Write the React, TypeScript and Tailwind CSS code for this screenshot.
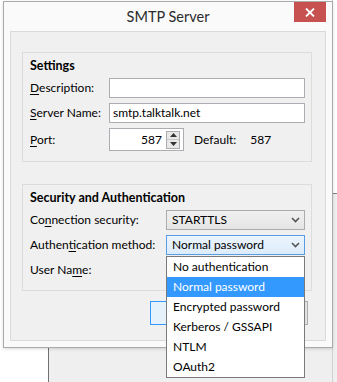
import React from "react";

const U = ({ children }: { children: React.ReactNode }) => (
  <span className="underline decoration-1 underline-offset-2">{children}</span>
);

const Chevron = () => (
  <svg width="9" height="6" viewBox="0 0 9 6" className="shrink-0">
    <path d="M1 1 L4.5 4.5 L8 1" fill="none" stroke="#555" strokeWidth="1.6" />
  </svg>
);

export default function App() {
  const items = [
    "No authentication",
    "Normal password",
    "Encrypted password",
    "Kerberos / GSSAPI",
    "NTLM",
    "OAuth2",
  ];
  return (
    <div
      className="relative w-[337px] h-[382px] overflow-hidden bg-white text-[12px] text-black"
      style={{ fontFamily: "Lato, 'Liberation Sans', sans-serif" }}
    >
      {/* desktop behind */}
      <div className="absolute left-[48px] top-[348px] w-[300px] h-[40px] bg-[#efefef] border-l border-[#707070]" />
      <div className="absolute left-[333px] top-[193px] w-[10px] h-[200px] bg-[#efefef] border-t border-[#808080]" />
      <div className="absolute left-[332px] top-0 w-px h-[382px] bg-[#d0d0d0]" />

      {/* window */}
      <div className="absolute left-[3px] top-[1px] w-[330px] h-[347px] border border-[#aaaaaa] bg-[#fafafa] shadow-[0_1px_3px_rgba(0,0,0,0.15)] flex flex-col">
        <div className="relative h-[29px] flex items-center justify-center">
          <span className="text-[14.5px] text-[#2b2b2b] mt-[1px]">SMTP Server</span>
          <div className="absolute right-[6px] top-0 w-[32px] h-[20px] bg-[#c75050] flex items-center justify-center">
            <svg width="10" height="9" viewBox="0 0 10 9">
              <path d="M1 0.5 L9 8.5 M9 0.5 L1 8.5" stroke="white" strokeWidth="1.8" />
            </svg>
          </div>
        </div>
        <div className="mx-[6px] border border-[#d9d9d9] bg-[#f0f0f0] h-[310px] px-[11px] pt-[20px] flex flex-col">
          {/* Settings group */}
          <div className="border border-[#dcdcdc] mr-[2px] pl-[7px] pr-[6px] pt-[6px] pb-[10px] flex flex-col">
            <div className="h-[14px] leading-[14px] font-bold text-[12.5px]">Settings</div>
            <div className="mt-[5px] flex items-center h-[20px]">
              <span className="w-[79px]">
                <U>D</U>escription:
              </span>
              <div className="flex-1 h-[20px] border border-[#abadb3] bg-white" />
            </div>
            <div className="mt-[5px] flex items-center h-[20px]">
              <span className="w-[79px]">
                <U>S</U>erver Name:
              </span>
              <div className="flex-1 h-[20px] border border-[#abadb3] bg-white flex items-center px-[3px]">
                smtp.talktalk.net
              </div>
            </div>
            <div className="mt-[5px] flex items-center h-[23px]">
              <span className="w-[79px]">
                <U>P</U>ort:
              </span>
              <div className="w-[75px] h-[23px] border border-[#abadb3] bg-white flex items-center justify-end pr-[3px] gap-[4px]">
                <span>587</span>
                <div className="w-[14px] h-[18px] border border-[#acacac] bg-[#e8e8e8] flex flex-col">
                  <div className="flex-1 flex items-center justify-center border-b border-[#c8c8c8]">
                    <svg width="7" height="4" viewBox="0 0 7 4"><path d="M0 4 L3.5 0 L7 4Z" fill="#333" /></svg>
                  </div>
                  <div className="flex-1 flex items-center justify-center">
                    <svg width="7" height="4" viewBox="0 0 7 4"><path d="M0 0 L3.5 4 L7 0Z" fill="#333" /></svg>
                  </div>
                </div>
              </div>
              <span className="ml-[10px]">Default:</span>
              <span className="ml-[14px]">587</span>
            </div>
          </div>

          {/* Security group */}
          <div className="mt-[22px] border border-[#dcdcdc] mr-[2px] pl-[7px] pr-[6px] pt-[6px] pb-[10px] flex flex-col">
            <div className="h-[14px] leading-[14px] font-bold text-[12.5px]">Security and Authentication</div>
            <div className="mt-[5px] flex items-center h-[20px]">
              <span className="w-[136px]">
                Co<U>n</U>nection security:
              </span>
              <div className="flex-1 h-[20px] border border-[#acacac] bg-gradient-to-b from-[#f0f0f0] to-[#e5e5e5] flex items-center justify-between pl-[5px] pr-[4px]">
                <span>STARTTLS</span>
                <Chevron />
              </div>
            </div>
            <div className="mt-[5px] flex items-center h-[20px]">
              <span className="w-[136px]">
                Authen<U>t</U>ication method:
              </span>
              <div className="flex-1 h-[20px] border border-[#569de5] bg-gradient-to-b from-[#ecf4fc] to-[#dcecfc] flex items-center justify-between pl-[5px] pr-[4px]">
                <span>Normal password</span>
                <Chevron />
              </div>
            </div>
            <div className="mt-[5px] flex items-center h-[20px]">
              <span className="w-[136px]">
                User Na<U>m</U>e:
              </span>
              <div className="flex-1 h-[20px] border border-[#abadb3] bg-white" />
            </div>
          </div>

          {/* buttons */}
          <div className="mt-[10px] flex justify-end gap-[8px] mr-[6px]">
            <div className="w-[75px] h-[24px] border border-[#3399ff] bg-[#e5f1fb]" />
            <div className="w-[75px] h-[24px] border border-[#adadad] bg-[#e1e1e1]" />
          </div>
        </div>
      </div>

      {/* dropdown list */}
      <div className="absolute left-[166px] top-[256px] w-[139px] h-[122px] border border-[#7a7a7a] bg-white flex flex-col">
        {items.map((it, i) => (
          <div
            key={it}
            className={
              "h-[20px] flex items-center pl-[6px] " +
              (i === 1 ? "bg-[#3399ff] text-white" : "text-black")
            }
          >
            {it}
          </div>
        ))}
      </div>
    </div>
  );
}
